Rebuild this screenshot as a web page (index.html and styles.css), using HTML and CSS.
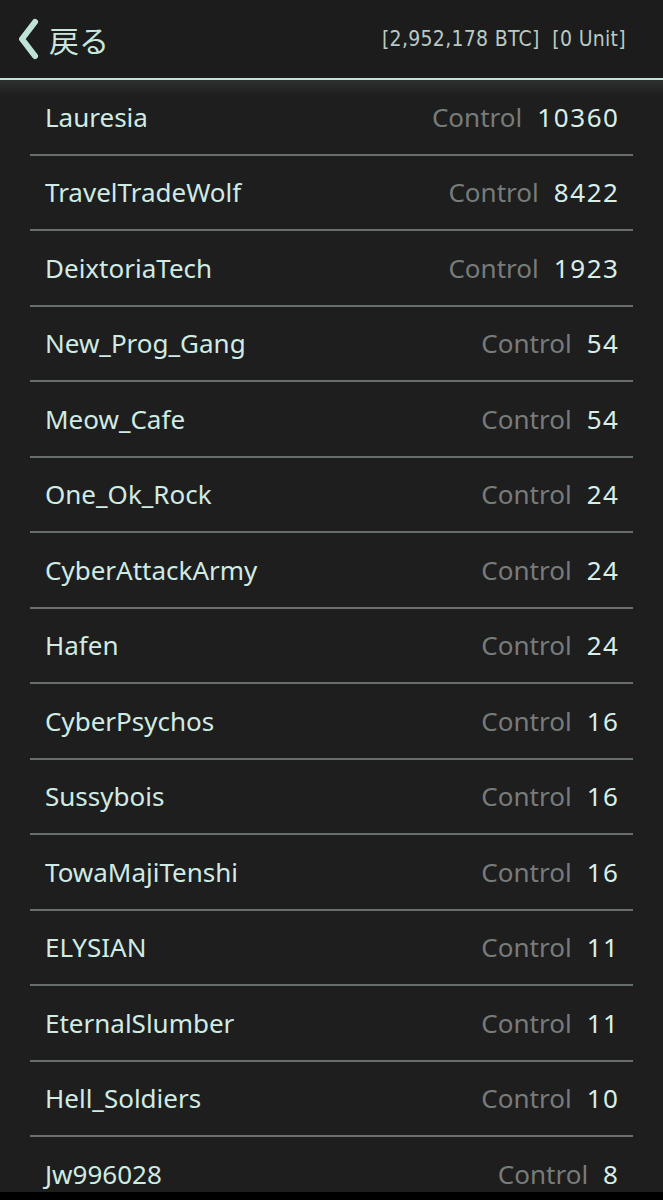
FILE: index.html
```html
<!DOCTYPE html>
<html lang="ja">
<head>
  <meta charset="UTF-8" />
  <meta name="viewport" content="width=device-width, initial-scale=1.0"/>
  <title>Control</title>
  <link rel="stylesheet" href="styles.css">
</head>
<body>
  <div class="screen">
    <header class="topbar">
      <a class="back" href="#">
        <svg class="chevron" width="24" height="42" viewBox="0 0 24 42">
          <path d="M19 4 L6 21 L19 38" fill="none" stroke="#bfe3d8" stroke-width="6" stroke-linecap="round" stroke-linejoin="round"/>
        </svg>
        <span class="back-label">戻る</span>
      </a>
      <div class="wallet">[2,952,178 BTC]&nbsp;&nbsp;[0 Unit]</div>
    </header>

    <ul class="list">
      <li class="row"><span class="name">Lauresia</span><span class="stat"><span class="label">Control</span><span class="value">10360</span></span></li>
      <li class="row"><span class="name">TravelTradeWolf</span><span class="stat"><span class="label">Control</span><span class="value">8422</span></span></li>
      <li class="row"><span class="name">DeixtoriaTech</span><span class="stat"><span class="label">Control</span><span class="value">1923</span></span></li>
      <li class="row"><span class="name">New_Prog_Gang</span><span class="stat"><span class="label">Control</span><span class="value">54</span></span></li>
      <li class="row"><span class="name">Meow_Cafe</span><span class="stat"><span class="label">Control</span><span class="value">54</span></span></li>
      <li class="row"><span class="name">One_Ok_Rock</span><span class="stat"><span class="label">Control</span><span class="value">24</span></span></li>
      <li class="row"><span class="name">CyberAttackArmy</span><span class="stat"><span class="label">Control</span><span class="value">24</span></span></li>
      <li class="row"><span class="name">Hafen</span><span class="stat"><span class="label">Control</span><span class="value">24</span></span></li>
      <li class="row"><span class="name">CyberPsychos</span><span class="stat"><span class="label">Control</span><span class="value">16</span></span></li>
      <li class="row"><span class="name">Sussybois</span><span class="stat"><span class="label">Control</span><span class="value">16</span></span></li>
      <li class="row"><span class="name">TowaMajiTenshi</span><span class="stat"><span class="label">Control</span><span class="value">16</span></span></li>
      <li class="row"><span class="name">ELYSIAN</span><span class="stat"><span class="label">Control</span><span class="value">11</span></span></li>
      <li class="row"><span class="name">EternalSlumber</span><span class="stat"><span class="label">Control</span><span class="value">11</span></span></li>
      <li class="row"><span class="name">Hell_Soldiers</span><span class="stat"><span class="label">Control</span><span class="value">10</span></span></li>
      <li class="row"><span class="name">Jw996028</span><span class="stat"><span class="label">Control</span><span class="value">8</span></span></li>
    </ul>
  </div>
  <div class="navbar"></div>
</body>
</html>
```

FILE: styles.css
```css
body {
  margin: 0;
  background-color: #000;
  font-family: "Noto Sans", "Noto Sans CJK JP", sans-serif;
  width: 663px;
  height: 1200px;
  overflow: hidden;
}

.screen {
  height: 1192px;
  background-color: #1e1e1e;
  overflow: hidden;
}

.topbar {
  height: 78px;
  display: flex;
  align-items: center;
  justify-content: space-between;
  padding: 0 37px 0 16px;
  background-color: #1c1c1c;
  border-bottom: 2px solid #bfe3d8;
}

.back {
  display: flex;
  align-items: center;
  gap: 9px;
  text-decoration: none;
}

.chevron {
  display: block;
}

.back-label {
  font-family: "Noto Sans CJK JP", sans-serif;
  font-size: 30px;
  color: #c9e6dd;
  line-height: 1;
}

.wallet {
  font-family: "Liberation Sans Narrow", "DejaVu Sans Condensed", sans-serif;
  font-size: 21px;
  color: #b9c9c4;
  letter-spacing: 0.3px;
}

.list {
  list-style: none;
  margin: 0;
  padding: 0 30px;
  background: linear-gradient(#2e2f2f 0, #1e1e1e 16px);
}

.row {
  height: 73.5px;
  display: flex;
  align-items: center;
  justify-content: space-between;
  padding: 0 15px;
  border-bottom: 2px solid #676e6b;
  font-size: 26px;
  line-height: 1;
}

.name {
  color: #cfebe3;
}

.stat {
  display: flex;
  gap: 15px;
}

.label {
  color: #777c7a;
}

.value {
  color: #d7efe8;
  letter-spacing: 1.6px;
  margin-right: -1.6px;
}

.navbar {
  height: 8px;
  background-color: #000;
}
```
